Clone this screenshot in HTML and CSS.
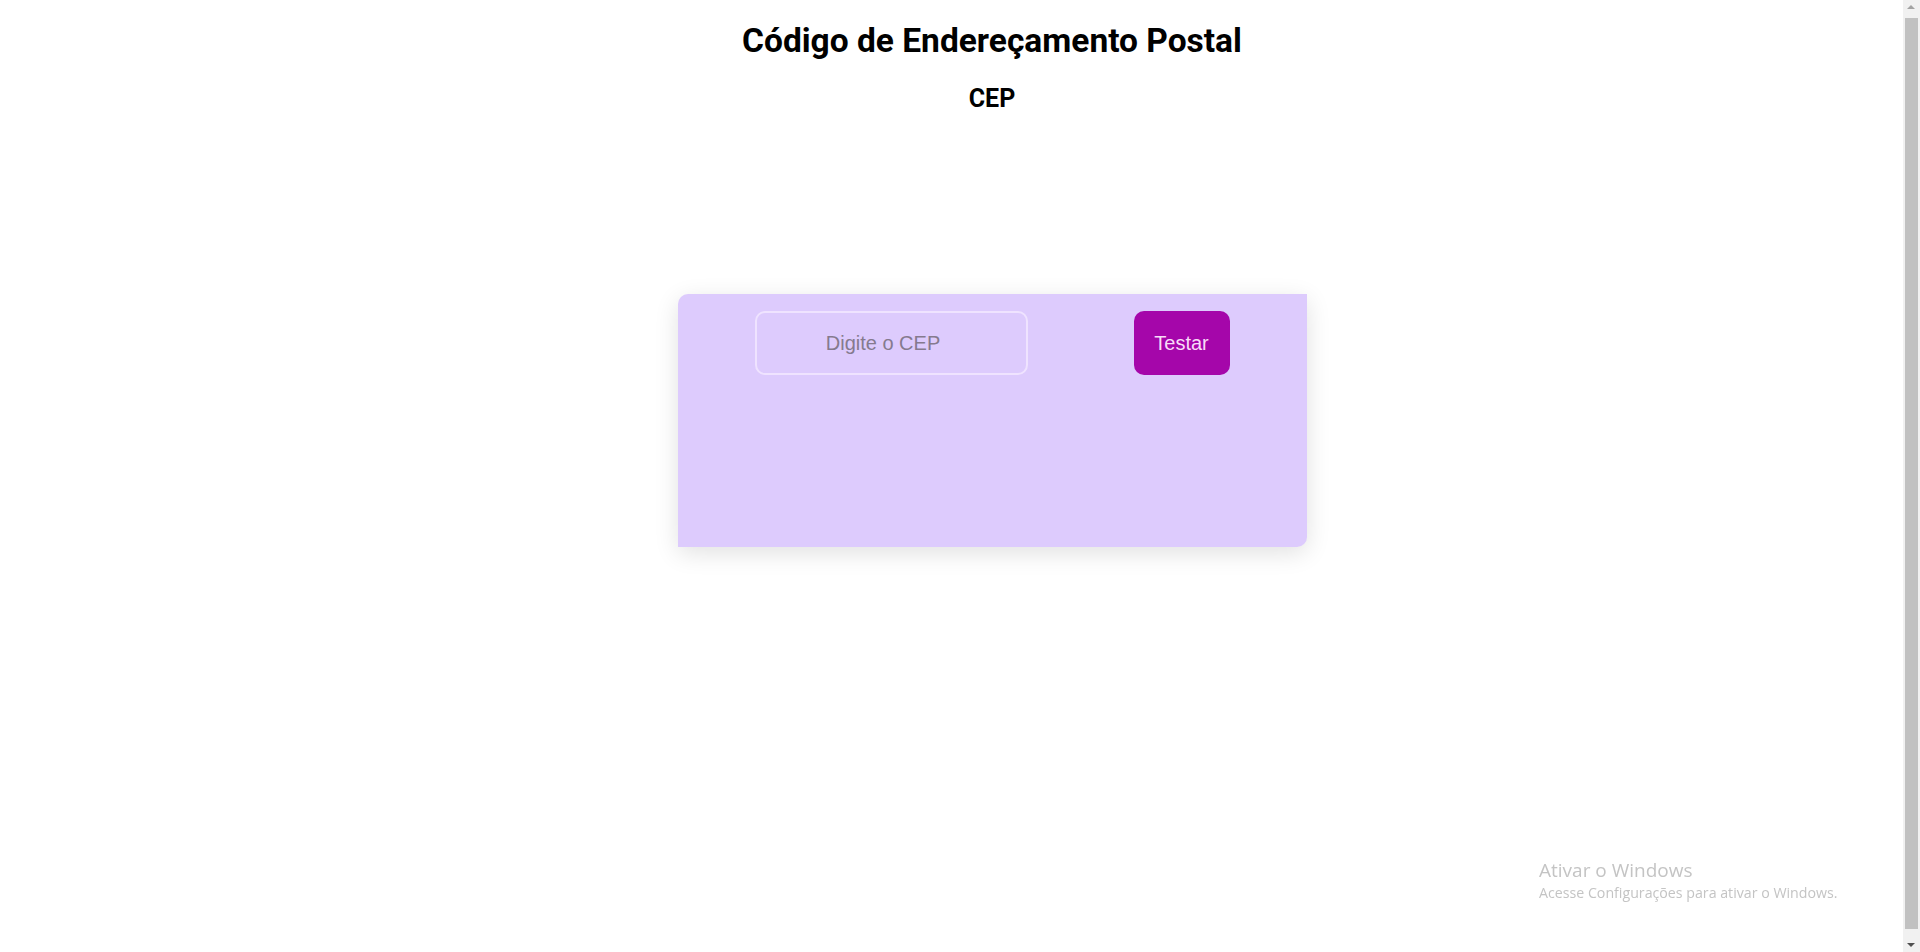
FILE: index.html
```html
<!DOCTYPE html>
<html lang="pt-BR">
<head>
<meta charset="utf-8">
<title>CEP</title>
<link rel="stylesheet" href="styles.css">
</head>
<body>
<main class="page">
  <h1 class="title">Código de Endereçamento Postal</h1>
  <h2 class="subtitle">CEP</h2>
  <section class="card">
    <input class="cep-input" type="text" placeholder="Digite o CEP">
    <button class="btn" type="button">Testar</button>
  </section>
</main>
<div class="watermark">
  <div class="wm-title">Ativar o Windows</div>
  <div class="wm-sub">Acesse Configurações para ativar o Windows.</div>
</div>
<div class="scrollbar">
  <div class="sb-arrow sb-up"></div>
  <div class="sb-thumb"></div>
  <div class="sb-arrow sb-down"></div>
</div>
</body>
</html>
```
FILE: styles.css
```css
html, body {
  margin: 0;
  padding: 0;
  height: 100%;
  overflow: hidden;
  background: #ffffff;
}

.page {
  width: 1903px;
  box-sizing: border-box;
  padding-left: 81px;
  display: flex;
  flex-direction: column;
  align-items: center;
  font-family: Roboto, "Liberation Sans", sans-serif;
  color: #000;
}

.title {
  margin: 21px 0 0;
  font-size: 33.5px;
  line-height: 39px;
  font-weight: 700;
}

.subtitle {
  margin: 24px 0 0;
  font-size: 25px;
  line-height: 29px;
  font-weight: 700;
}

.card {
  margin-top: 181px;
  width: 629px;
  height: 253px;
  box-sizing: border-box;
  padding: 17px 77px;
  background: #ddcbfd;
  border-radius: 10px 0 10px 0;
  box-shadow: 0 6px 24px rgba(0, 0, 0, 0.12);
  display: flex;
  justify-content: space-between;
  align-items: flex-start;
}

.cep-input {
  width: 273px;
  height: 64px;
  box-sizing: border-box;
  border: 2px solid #efe3ff;
  border-radius: 10px;
  background: transparent;
  font-family: "Liberation Sans", Arial, sans-serif;
  font-size: 20px;
  text-align: center;
  padding: 0 16px 0 0;
  color: #333;
  outline: none;
}

.cep-input::placeholder {
  color: #857a8e;
}

.btn {
  width: 96px;
  height: 64px;
  border: none;
  border-radius: 10px;
  background: #a506aa;
  color: #f8dcf8;
  font-family: "Liberation Sans", Arial, sans-serif;
  font-size: 20px;
  padding: 0;
  cursor: pointer;
}

.watermark {
  position: fixed;
  left: 1539px;
  top: 857px;
  font-family: "Open Sans", "Noto Sans", sans-serif;
  color: #c4c4c4;
}

.wm-title {
  font-size: 19px;
  line-height: 26px;
}

.wm-sub {
  font-size: 14.2px;
  line-height: 20px;
  margin-top: 0;
}

.scrollbar {
  position: fixed;
  top: 0;
  right: 0;
  width: 17px;
  height: 952px;
  background: #f1f1f1;
  display: flex;
  flex-direction: column;
  align-items: center;
}

.sb-arrow {
  width: 17px;
  height: 17px;
  flex: none;
  position: relative;
}

.sb-up::after,
.sb-down::after {
  content: "";
  position: absolute;
  left: 4px;
  width: 0;
  height: 0;
  border-left: 4px solid transparent;
  border-right: 4px solid transparent;
}

.sb-up::after {
  top: 5px;
  border-bottom: 4px solid #a3a3a3;
}

.sb-down::after {
  bottom: 5px;
  border-top: 4px solid #505050;
}

.sb-thumb {
  flex: 1;
  width: 13px;
  margin: 1px 0 6px;
  background: #c1c1c1;
}
```
